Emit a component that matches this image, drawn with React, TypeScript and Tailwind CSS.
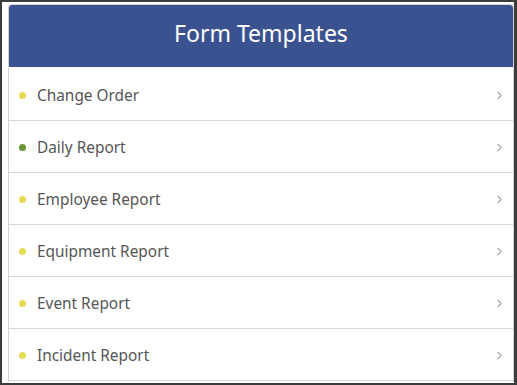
import { ChevronRight } from 'lucide-react';

const templates = [
    { label: 'Change Order', color: 'bg-[#e6dc55]' },
    { label: 'Daily Report', color: 'bg-[#6b9438]' },
    { label: 'Employee Report', color: 'bg-[#e6dc55]' },
    { label: 'Equipment Report', color: 'bg-[#e6dc55]' },
    { label: 'Event Report', color: 'bg-[#e6dc55]' },
    { label: 'Incident Report', color: 'bg-[#e6dc55]' },
];

export default function App() {
    return (
        <div className="h-[385px] w-[517px] bg-[#3c3c3c] pb-[2px] pl-[2px] pr-[3px] pt-[2px]" style={{ fontFamily: '"Noto Sans", "Open Sans", sans-serif' }}>
            <div className="flex h-full flex-col bg-white pb-[1px] pl-[6px] pr-0 pt-[2px]">
                <div className="flex flex-1 flex-col overflow-hidden rounded-t-[3px] border-x border-t border-[#d4d4d4]">
                    <div className="flex h-[62px] shrink-0 items-center justify-center rounded-t-[3px] bg-[#3a5390] pb-[5px]">
                        <h1 className="text-[23px] text-white">Form Templates</h1>
                    </div>
                    <ul className="flex flex-col pt-[2px]">
                        {templates.map((t) => (
                            <li key={t.label} className="flex h-[52px] items-center border-b border-[#d8d8d8] pl-[10px] pr-[7px] pt-[2px]">
                                <span className={`h-[7px] w-[7px] rounded-full ${t.color}`} />
                                <span className="ml-[11px] flex-1 text-[15.4px] text-[#555555]">{t.label}</span>
                                <ChevronRight className="h-[13px] w-[13px] text-[#555555]" strokeWidth={1.6} />
                            </li>
                        ))}
                    </ul>
                </div>
            </div>
        </div>
    );
}
